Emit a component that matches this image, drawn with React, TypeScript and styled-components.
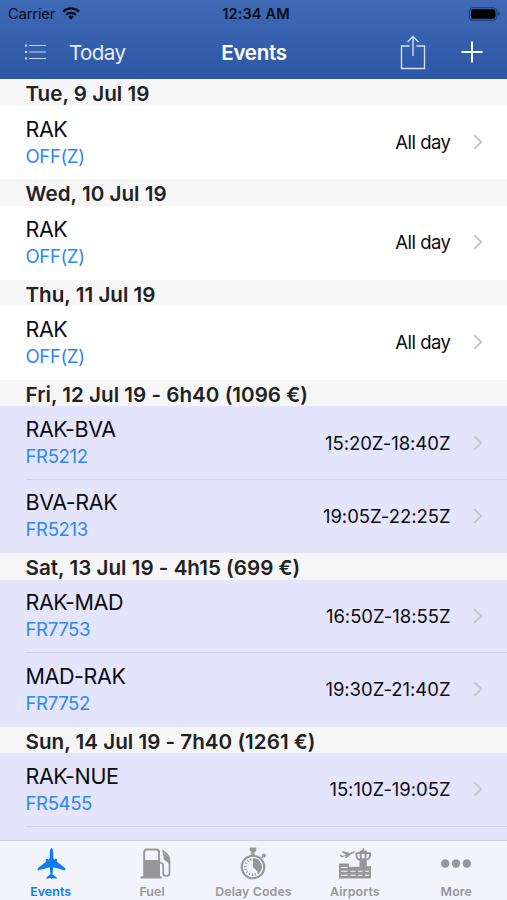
import React from "react";
import styled, { createGlobalStyle } from "styled-components";

const GlobalStyle = createGlobalStyle`
  * { box-sizing: border-box; }
  body { margin: 0; background: #fff; }
`;

const Screen = styled.div`
  width: 507px;
  height: 900px;
  overflow: hidden;
  display: flex;
  flex-direction: column;
  font-family: Inter, "Liberation Sans", sans-serif;
  color: #0b0b12;
  white-space: nowrap;
`;

const TopBar = styled.header`
  flex: none;
  height: 79.4px;
  background: linear-gradient(#4069b6, #2d57a4);
`;

const StatusBar = styled.div`
  display: grid;
  grid-template-columns: 1fr auto 1fr;
  align-items: center;
  height: 27px;
  padding: 0 6px 0 8px;
  color: #080d18;
`;

const Carrier = styled.div`
  display: flex;
  align-items: center;
  gap: 7px;
  font-size: 14.7px;
  letter-spacing: -0.15px;
`;

const Clock = styled.div`
  font-size: 14.6px;
  font-weight: 600;
  letter-spacing: 0.1px;
  padding-left: 3px;
`;

const Battery = styled.svg`
  justify-self: end;
`;

const NavBar = styled.nav`
  display: grid;
  grid-template-columns: 1fr auto 1fr;
  align-items: center;
  height: 50px;
  padding: 0 24px 0 25px;
  color: #fff;
`;

const NavGroup = styled.div<{ $end?: boolean }>`
  display: flex;
  align-items: center;
  justify-content: ${(p) => (p.$end ? "flex-end" : "flex-start")};
  gap: ${(p) => (p.$end ? "35px" : "22px")};
`;

const NavButton = styled.span`
  font-size: 20.6px;
  letter-spacing: -0.6px;
  color: #e6edfa;
`;

const NavTitle = styled.h1`
  margin: 0;
  font-size: 20.6px;
  font-weight: 600;
  letter-spacing: -0.35px;
`;

const EventList = styled.main`
  flex: 1;
  min-height: 0;
  overflow: hidden;
`;

const DayHeader = styled.h2`
  margin: 0;
  height: 26.7px;
  padding-left: 25.5px;
  background: #f6f6f7;
  color: #222225;
  font-size: 20.6px;
  line-height: 29px;
  font-weight: 600;
  letter-spacing: 0.02px;
`;

const Row = styled.div<{ $flight: boolean }>`
  height: 73.4px;
  padding-left: 25.5px;
  background: ${(p) => (p.$flight ? "#e5e4fd" : "#fff")};
`;

const RowBody = styled.div<{ $divided: boolean }>`
  display: flex;
  align-items: center;
  height: 100%;
  padding-right: 24px;
  border-bottom: 1px solid ${(p) => (p.$divided ? "#d4d3ea" : "transparent")};
`;

const Labels = styled.div`
  flex: 1;
`;

const Route = styled.div`
  font-size: 21.5px;
  line-height: 28px;
  letter-spacing: -0.4px;
`;

const Code = styled.div`
  font-size: 18.6px;
  line-height: 27px;
  letter-spacing: -0.4px;
  color: #2b88f5;
`;

const Time = styled.div<{ $range: boolean }>`
  margin-right: 22.5px;
  font-size: 18.5px;
  letter-spacing: ${(p) => (p.$range ? "-0.04px" : "-0.5px")};
`;

const TabBar = styled.footer`
  flex: none;
  display: grid;
  grid-template-columns: repeat(5, 1fr);
  height: 60px;
  background: #f3f3fb;
  border-top: 1px solid #d0d0dc;
`;

const Tab = styled.div<{ $active: boolean }>`
  display: flex;
  flex-direction: column;
  align-items: center;
  padding-top: 6px;
  color: ${(p) => (p.$active ? "#0b7bf6" : "#979799")};
  font-size: 12.4px;
  line-height: 16px;
  font-weight: 600;
  letter-spacing: 0.1px;

  svg { display: block; margin-bottom: 4px; }
`;

const WifiIcon = () => (
  <svg width="18" height="13" viewBox="0 0 18 13" fill="none" stroke="currentColor" strokeWidth="2.3">
    <path d="M1 4.7a11.4 11.4 0 0 1 16 0M4 7.9a7 7 0 0 1 10 0" />
    <path d="M6.2 9.8a4 4 0 0 1 5.6 0L9 12.7z" fill="currentColor" stroke="none" />
  </svg>
);

const BatteryIcon = () => (
  <Battery width="33" height="14" viewBox="0 0 33 14">
    <rect x="1.5" y=".8" width="27.5" height="12.4" rx="3.6" fill="none" stroke="#1d3b78" strokeWidth="1.1" />
    <rect x="3" y="2.3" width="24.5" height="9.4" rx="2.2" fill="#000" />
    <path d="M30.2 4.8c2 .7 2 3.7 0 4.4z" fill="#1d3b78" />
  </Battery>
);

const ListIcon = () => (
  <svg width="22" height="16" viewBox="0 0 22 16" stroke="#c8d6f2" strokeWidth="1.2">
    <path d="M4 1.5h17M4 8h17M4 14.5h17" />
    <path d="M0 1.5h2.2M0 8h2.2M0 14.5h2.2" strokeWidth="2" />
  </svg>
);

const ShareIcon = () => (
  <svg width="26" height="36" viewBox="0 0 26 36" fill="none" stroke="#d3dff5" strokeWidth="1.4">
    <path d="M9.5 12H1.5v22.5h23V12h-8M13 22V2.5M7.5 8 13 2.5 18.5 8" />
  </svg>
);

const PlusIcon = () => (
  <svg width="22" height="22" viewBox="0 0 22 22" stroke="#fff" strokeWidth="2">
    <path d="M11 .5v21M.5 11h21" />
  </svg>
);

const Chevron = () => (
  <svg width="10" height="16" viewBox="0 0 10 16" fill="none" stroke="#c6c6cd" strokeWidth="1.9">
    <path d="m1.3 1.2 7 6.8-7 6.8" />
  </svg>
);

const PlaneIcon = () => (
  <svg width="32" height="33" viewBox="0 0 32 33" fill="currentColor">
    <path d="M16.5.8c1.3 1.2 1.7 3 1.7 5v5.5l1.8 1.6v-1h2v2.9l8.3 6.500v2.200L18.300 20.300l-.8 7.200 4 2.800v1.500l-4.200-.8-.8 1-.8-1-4.200.8v-1.500l4-2.800-.8-7.200L2.700 23.500v-2.200l8.300-6.500v-2.900h2v1l1.800-1.600V5.800c0-2 .4-3.800 1.700-5Z" />
  </svg>
);

const FuelIcon = () => (
  <svg width="40" height="33" viewBox="-4 0 40 33">
    <g transform="translate(3 0)">
      <path fill="currentColor" fillRule="evenodd" d="M8 1.5h9.500a3.500 3.500 0 0 1 3.500 3.500v24.200h.7q1.200 0 1.200 2.300H1.300q0-2.300 1.200-2.300h1.700V5A3.500 3.500 0 0 1 8 1.500ZM8.200 3.500a2 2 0 0 0-2 2v7.500h13V5.500a2 2 0 0 0-2-2Z" />
      <path fill="none" stroke="currentColor" strokeWidth="1.7" d="M21 16h1c1.500 0 2.200.8 2.200 2.500v7.500c0 4 6.300 4 6.300 0V14c0-3-.4-4.500-2-6.200l-5-4.400" />
      <path fill="currentColor" d="m23.500 4.500 6.500 6v7c-1-3.500-5.500-3.500-5.500-6.500v-2Z" />
    </g>
  </svg>
);

const StopwatchIcon = () => (
  <svg width="32" height="33" viewBox="0 0 32 33" fill="none" stroke="currentColor">
    <circle cx="16" cy="20" r="11.3" strokeWidth="2.1" />
    <circle cx="16" cy="20" r="7.7" strokeWidth="2.5" strokeDasharray="1 2.016" />
    <path d="M16 20V11.2A8.8 8.8 0 0 1 22.2 26.2Z" fill="currentColor" stroke="none" />
    <path d="M12.7.5h6.6v3L17.5 5.4V8h-3V5.4L12.7 3.5ZM24.5 8l2.5-1.8 2.3 2-1.7 2.6-1.3-.7-1 1.3-1.2-1.2 1-1Z" fill="currentColor" stroke="none" />
  </svg>
);

const AirportIcon = () => (
  <svg width="34" height="33" viewBox="0 0 34 33" fill="currentColor">
    <path d="M1.5 8.2 3 7.7l2 1.3 3.200-1.200-4.700-2.800 1.600-.8 7 1.700 3-1.400c1.600-.6 2.400.6.7 1.400l-3.300 1.600L8.800 11H6.800l1.300-2.200-4.300 1.600Z" />
    <path fillRule="evenodd" d="M24.500 1h1.500v2.500H29v1.800h4v4.200l-2.200 3.700h-2v6H33v12.300H1V16.500h10v3.200h10.500v-6.500h-2L17.500 9.500V5.300h4V3.500h3ZM19.300 7v2.200l1 2H22L21.600 7Zm4.200 0 .4 4.200h2.500l.4-4.200Zm5.200 0-.4 4.200h1.700l1-2V7Z" />
    <path d="M3 20.500h6.500M3 24.300h6.500M3 28.200h6.500M12.500 24.300h5M12.500 28.200h5M20 24.300h4.500M20 28.200h4.500M27 24.300h4M27 28.200h4" stroke="#f3f3fb" strokeWidth="1.1" />
  </svg>
);

const MoreIcon = () => (
  <svg width="32" height="33" viewBox="0 0 32 33" fill="currentColor">
    <circle cx="5.2" cy="16.5" r="4.2" />
    <circle cx="16" cy="16.5" r="4.2" />
    <circle cx="26.8" cy="16.5" r="4.2" />
  </svg>
);

type Entry = { route: string; code: string; time: string };
type Day = { title: string; flight: boolean; entries: Entry[] };

const off: Entry[] = [{ route: "RAK", code: "OFF(Z)", time: "All day" }];

const days: Day[] = [
  { title: "Tue, 9 Jul 19", flight: false, entries: off },
  { title: "Wed, 10 Jul 19", flight: false, entries: off },
  { title: "Thu, 11 Jul 19", flight: false, entries: off },
  {
    title: "Fri, 12 Jul 19 - 6h40 (1096 €)",
    flight: true,
    entries: [
      { route: "RAK-BVA", code: "FR5212", time: "15:20Z-18:40Z" },
      { route: "BVA-RAK", code: "FR5213", time: "19:05Z-22:25Z" },
    ],
  },
  {
    title: "Sat, 13 Jul 19 - 4h15 (699 €)",
    flight: true,
    entries: [
      { route: "RAK-MAD", code: "FR7753", time: "16:50Z-18:55Z" },
      { route: "MAD-RAK", code: "FR7752", time: "19:30Z-21:40Z" },
    ],
  },
  {
    title: "Sun, 14 Jul 19 - 7h40 (1261 €)",
    flight: true,
    entries: [
      { route: "RAK-NUE", code: "FR5455", time: "15:10Z-19:05Z" },
      { route: "", code: "", time: "" },
    ],
  },
];

const tabs = [
  { label: "Events", icon: <PlaneIcon /> },
  { label: "Fuel", icon: <FuelIcon /> },
  { label: "Delay Codes", icon: <StopwatchIcon /> },
  { label: "Airports", icon: <AirportIcon /> },
  { label: "More", icon: <MoreIcon /> },
];

export default function App() {
  return (
    <Screen>
      <GlobalStyle />
      <TopBar>
        <StatusBar>
          <Carrier>Carrier <WifiIcon /></Carrier>
          <Clock>12:34 AM</Clock>
          <BatteryIcon />
        </StatusBar>
        <NavBar>
          <NavGroup>
            <ListIcon />
            <NavButton>Today</NavButton>
          </NavGroup>
          <NavTitle>Events</NavTitle>
          <NavGroup $end>
            <ShareIcon />
            <PlusIcon />
          </NavGroup>
        </NavBar>
      </TopBar>
      <EventList>
        {days.map((day) => (
          <section key={day.title}>
            <DayHeader>{day.title}</DayHeader>
            {day.entries.map((e, i) => (
              <Row key={i} $flight={day.flight}>
                <RowBody $divided={i < day.entries.length - 1}>
                  <Labels>
                    <Route>{e.route}</Route>
                    <Code>{e.code}</Code>
                  </Labels>
                  <Time $range={day.flight}>{e.time}</Time>
                  {e.time && <Chevron />}
                </RowBody>
              </Row>
            ))}
          </section>
        ))}
      </EventList>
      <TabBar>
        {tabs.map((t, i) => (
          <Tab key={t.label} $active={i === 0}>
            {t.icon}
            {t.label}
          </Tab>
        ))}
      </TabBar>
    </Screen>
  );
}
